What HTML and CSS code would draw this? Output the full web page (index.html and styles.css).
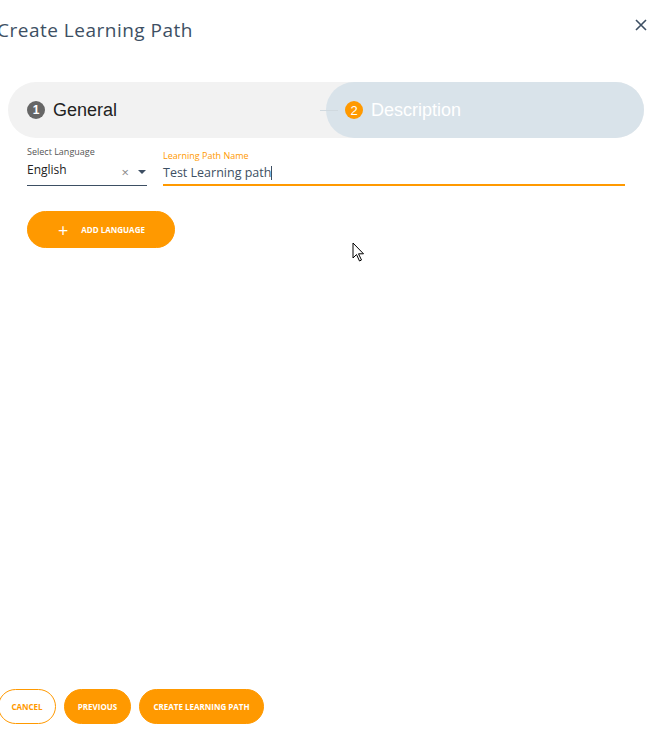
FILE: index.html
```html
<!DOCTYPE html>
<html lang="en">
<head>
    <meta charset="UTF-8">
    <meta name="viewport" content="width=device-width, initial-scale=1.0">
    <title>Create Learning Path</title>
    <link rel="stylesheet" href="styles.css">
</head>
<body>

    <div class="dialog">
        <!-- Header -->
        <div class="dialog-header">
            <h1 class="dialog-title">Create Learning Path</h1>
            <button class="close-btn" aria-label="Close">
                <svg width="12" height="12" viewBox="0 0 12 12">
                    <path d="M1 1 L11 11 M11 1 L1 11" stroke="#3d4f63" stroke-width="1.6" fill="none"/>
                </svg>
            </button>
        </div>

        <!-- Stepper -->
        <div class="stepper">
            <div class="step step-done">
                <span class="step-num">1</span>
                <span class="step-label">General</span>
            </div>
            <div class="step step-active">
                <span class="step-line"></span>
                <span class="step-num">2</span>
                <span class="step-label">Description</span>
            </div>
        </div>

        <!-- Form -->
        <div class="form-row">
            <div class="field field-select">
                <label class="field-label">Select Language</label>
                <div class="field-control">
                    <span class="field-value">English</span>
                    <span class="select-clear">&times;</span>
                    <span class="select-arrow"></span>
                </div>
            </div>
            <div class="field field-name">
                <label class="field-label">Learning Path Name</label>
                <div class="field-control">
                    <span class="field-value">Test Learning path<span class="caret"></span></span>
                </div>
            </div>
        </div>

        <button class="btn btn-add"><span class="plus">+</span>ADD LANGUAGE</button>

        <div class="spacer">
            <svg class="pointer" width="14" height="22" viewBox="0 0 14 22">
                <path d="M1 1 L1 16 L4.5 12.5 L7.5 19 L9.5 18 L6.5 11.8 L11.5 11.8 Z" fill="#fff" stroke="#000" stroke-width="1"/>
            </svg>
        </div>

        <!-- Footer -->
        <div class="dialog-footer">
            <button class="btn btn-outline">CANCEL</button>
            <button class="btn">PREVIOUS</button>
            <button class="btn">CREATE LEARNING PATH</button>
        </div>
    </div>

</body>
</html>
```

FILE: styles.css
```css
body {
    margin: 0;
    padding: 0;
    background-color: #ffffff;
    font-family: 'Open Sans', 'Liberation Sans', sans-serif;
    color: #3d4f63;
}

.dialog {
    width: 659px;
    height: 756px;
    display: flex;
    flex-direction: column;
    overflow: hidden;
}

.dialog-header {
    display: flex;
    justify-content: space-between;
    align-items: center;
    height: 60px;
    padding: 0 12px 0 0;
}

.dialog-title {
    margin: 0 0 0 -3px;
    font-size: 19px;
    font-weight: 400;
    color: #3d4f63;
    letter-spacing: 0.5px;
}

.close-btn {
    background: none;
    border: none;
    padding: 0;
    margin-top: -10px;
    cursor: pointer;
    display: flex;
}

.stepper {
    display: flex;
    height: 56px;
    margin: 22px 15px 0 8px;
    background-color: #f2f2f2;
    border-radius: 28px;
}

.step {
    display: flex;
    align-items: center;
    font-family: 'Liberation Sans', Arial, sans-serif;
    font-size: 18px;
}

.step-done {
    flex: 1;
    padding-left: 19px;
    color: #222222;
}

.step-active {
    position: relative;
    width: 318px;
    padding-left: 19px;
    box-sizing: border-box;
    background-color: #d9e3ea;
    border-radius: 28px;
    color: #ffffff;
}

.step-line {
    position: absolute;
    left: -6px;
    top: 28px;
    width: 18px;
    height: 1px;
    background-color: #d0d9df;
}

.step-num {
    width: 18px;
    height: 18px;
    border-radius: 50%;
    display: inline-flex;
    justify-content: center;
    align-items: center;
    font-size: 12px;
    font-weight: 700;
    color: #ffffff;
    margin-right: 8px;
}

.step-done .step-num {
    background-color: #666666;
}

.step-active .step-num {
    background-color: #ff9900;
    font-weight: 400;
    font-size: 13px;
}

.form-row {
    display: flex;
    gap: 16px;
    margin: 8px 34px 0 27px;
}

.field {
    display: flex;
    flex-direction: column;
}

.field-select {
    width: 120px;
}

.field-name {
    flex: 1;
    padding-top: 4px;
}

.field-label {
    font-size: 9px;
    line-height: 11px;
    color: #555555;
    white-space: nowrap;
}

.field-name .field-label {
    color: #ff9900;
}

.field-control {
    display: flex;
    align-items: center;
}

.field-select .field-control {
    border-bottom: 1px solid #3d4f63;
    padding-bottom: 3px;
    box-sizing: border-box;
    height: 29px;
}

.field-name .field-control {
    border-bottom: 2px solid #ff9900;
    height: 23px;
}

.field-value {
    flex: 1;
    font-size: 12px;
    color: #222222;
}

.field-name .field-value {
    font-size: 12.5px;
    color: #3d4f63;
}

.select-clear {
    font-size: 13px;
    color: #888888;
    margin: 4px 9px 0 0;
}

.select-arrow {
    width: 0;
    height: 0;
    border-left: 4px solid transparent;
    border-right: 4px solid transparent;
    border-top: 4px solid #3d4f63;
    margin: 4px 1px 0 0;
}

.caret {
    display: inline-block;
    width: 1px;
    height: 14px;
    background-color: #3d4f63;
    vertical-align: -3px;
}

.btn {
    font-family: 'Open Sans', 'Liberation Sans', sans-serif;
    font-size: 8px;
    font-weight: 700;
    color: #ffffff;
    background-color: #ff9900;
    border: 1px solid #ff9900;
    border-radius: 18px;
    height: 35px;
    padding: 0 8px;
    cursor: pointer;
}

.btn-add {
    align-self: flex-start;
    display: flex;
    align-items: center;
    height: 37px;
    width: 148px;
    margin: 25px 0 0 27px;
    padding: 0 0 0 30px;
    border-radius: 19px;
}

.plus {
    font-size: 18px;
    font-weight: 400;
    margin-right: 13px;
    line-height: 1;
}

.spacer {
    flex: 1;
    position: relative;
}

.pointer {
    position: absolute;
    left: 352px;
    top: -6px;
}

.btn-outline {
    background-color: #ffffff;
    color: #ff9900;
}

.dialog-footer {
    display: flex;
    gap: 8px;
    margin: 0 0 32px -2px;
}

.dialog-footer .btn:nth-child(1) {
    width: 58px;
}

.dialog-footer .btn:nth-child(2) {
    width: 67px;
}

.dialog-footer .btn:nth-child(3) {
    width: 125px;
}
```
